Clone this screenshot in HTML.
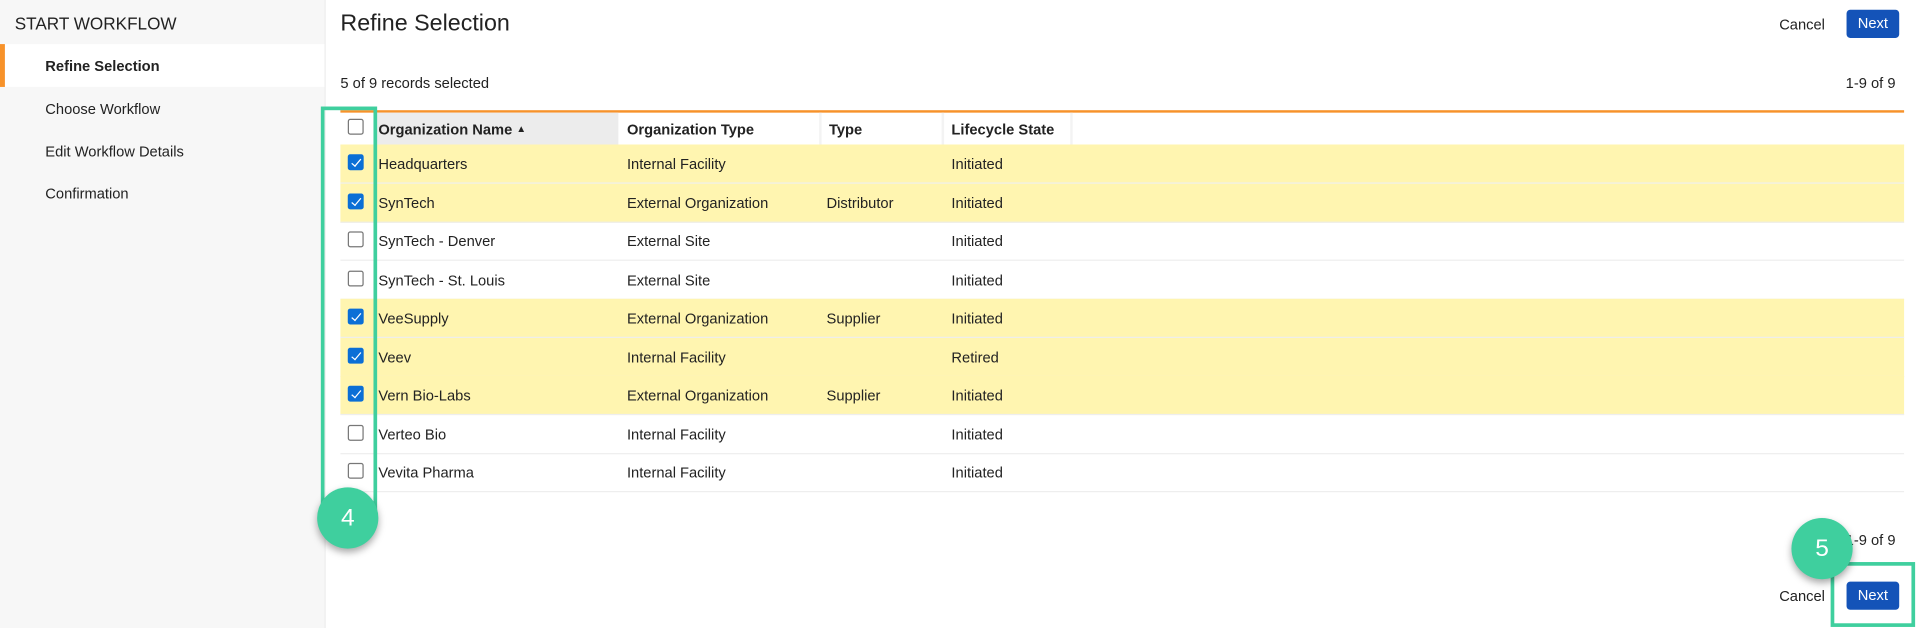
<!DOCTYPE html>
<html><head><meta charset="utf-8"><style>
html,body{margin:0;padding:0;width:1920px;height:628px;overflow:hidden;background:#fff;font-family:"Liberation Sans",Arial,sans-serif;color:#222}
#w{position:absolute;left:0;top:0;width:1568px;height:513px;transform:scale(1.2245);transform-origin:0 0}
.a{position:absolute;white-space:nowrap}
.side{position:absolute;left:0;top:0;width:265px;height:513px;background:#f7f7f7;border-right:1px solid #eee}
.item{position:absolute;left:37px;font-size:12px}
.btn{position:absolute;background:#1453b8;color:#fff;font-size:12px;border-radius:3px;text-align:center;line-height:23px}
.row{position:absolute;left:278px;width:1277px;height:31px;border-bottom:1px solid #eee;font-size:12px}
.row.s{background:#fff5b0}
.row span{position:absolute;top:9px}
.cb{position:absolute;left:6px;top:8px;width:11px;height:11px;border:1px solid #777;border-radius:2px;background:#fff}
.cb.c{background:#0b6fd6;border-color:#0b6fd6}
.cb.c:after{content:"";position:absolute;left:3.5px;top:0.5px;width:3px;height:7px;border:solid #fff;border-width:0 1.6px 1.6px 0;transform:rotate(40deg)}
.circ{position:absolute;width:50px;height:50px;border-radius:50%;background:#3fcf9e;color:#fff;font-size:20px;text-align:center;line-height:50px;box-shadow:0 3px 6px rgba(0,0,0,.35)}
.box{position:absolute;border:3px solid #3fcf9e}
</style></head><body><div id="w">
<div class="side">
<div class="a" style="left:12px;top:11px;font-size:14px">START WORKFLOW</div>
<div style="position:absolute;left:0;top:36px;width:265px;height:35px;background:#fff"></div>
<div style="position:absolute;left:0;top:36px;width:4px;height:35px;background:#f7922a"></div>
<div class="item a" style="top:47px;font-weight:bold">Refine Selection</div>
<div class="item a" style="top:82px">Choose Workflow</div>
<div class="item a" style="top:117px">Edit Workflow Details</div>
<div class="item a" style="top:151px">Confirmation</div>
</div>
<div class="a" style="left:278px;top:9px;font-size:19px">Refine Selection</div>
<div class="a" style="left:1453px;top:13px;font-size:12px">Cancel</div>
<div class="btn" style="left:1508px;top:8px;width:43px;height:23px">Next</div>
<div class="a" style="left:278px;top:61px;font-size:12px">5 of 9 records selected</div>
<div class="a" style="right:20px;top:61px;font-size:12px">1-9 of 9</div>
<div style="position:absolute;left:278px;top:90px;width:1277px;height:2px;background:#f7922a"></div>
<div class="row" style="top:92px;height:26px;font-weight:bold">
<div class="cb" style="top:5px"></div>
<div style="position:absolute;left:27px;top:0;width:200px;height:26px;background:#ececec"></div>
<span style="left:31px;top:7px">Organization Name <span style="position:static;font-size:8px;vertical-align:2px">▲</span></span>
<span style="left:234px;top:7px">Organization Type</span>
<span style="left:399px;top:7px">Type</span>
<span style="left:499px;top:7px">Lifecycle State</span>
<div style="position:absolute;left:391px;top:0;width:2px;height:26px;background:#f3f3f3"></div>
<div style="position:absolute;left:491px;top:0;width:2px;height:26px;background:#f3f3f3"></div>
<div style="position:absolute;left:596px;top:0;width:2px;height:26px;background:#f3f3f3"></div>
</div>
<div class="row s" style="top:118px"><div class="cb c"></div><span style="left:31px">Headquarters</span><span style="left:234px">Internal Facility</span><span style="left:499px">Initiated</span></div>
<div class="row s" style="top:150px"><div class="cb c"></div><span style="left:31px">SynTech</span><span style="left:234px">External Organization</span><span style="left:397px">Distributor</span><span style="left:499px">Initiated</span></div>
<div class="row" style="top:181px"><div class="cb"></div><span style="left:31px">SynTech - Denver</span><span style="left:234px">External Site</span><span style="left:499px">Initiated</span></div>
<div class="row" style="top:213px"><div class="cb"></div><span style="left:31px">SynTech - St. Louis</span><span style="left:234px">External Site</span><span style="left:499px">Initiated</span></div>
<div class="row s" style="top:244px"><div class="cb c"></div><span style="left:31px">VeeSupply</span><span style="left:234px">External Organization</span><span style="left:397px">Supplier</span><span style="left:499px">Initiated</span></div>
<div class="row s" style="top:276px"><div class="cb c"></div><span style="left:31px">Veev</span><span style="left:234px">Internal Facility</span><span style="left:499px">Retired</span></div>
<div class="row s" style="top:307px"><div class="cb c"></div><span style="left:31px">Vern Bio-Labs</span><span style="left:234px">External Organization</span><span style="left:397px">Supplier</span><span style="left:499px">Initiated</span></div>
<div class="row" style="top:339px"><div class="cb"></div><span style="left:31px">Verteo Bio</span><span style="left:234px">Internal Facility</span><span style="left:499px">Initiated</span></div>
<div class="row" style="top:370px"><div class="cb"></div><span style="left:31px">Vevita Pharma</span><span style="left:234px">Internal Facility</span><span style="left:499px">Initiated</span></div>
<div class="a" style="right:20px;top:434px;font-size:12px">1-9 of 9</div>
<div class="a" style="left:1453px;top:480px;font-size:12px">Cancel</div>
<div class="btn" style="left:1508px;top:475px;width:43px;height:23px">Next</div>
<div class="box" style="left:262px;top:87px;width:40px;height:325px"></div>
<div class="circ" style="left:259px;top:398px">4</div>
<div class="box" style="left:1495px;top:459px;width:63px;height:47px"></div>
<div class="circ" style="left:1463px;top:423px">5</div>
</div></body></html>
